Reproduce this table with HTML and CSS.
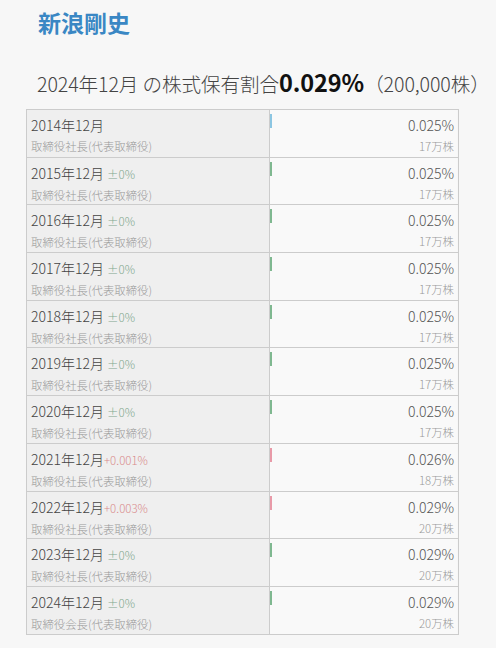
FILE: index.html
```html
<!DOCTYPE html>
<html lang="ja">
<head>
<meta charset="utf-8">
<link rel="stylesheet" href="styles.css">
</head>
<body>
<div class="page">
  <h1 class="name">新浪剛史</h1>
  <p class="summary">2024年12月 の株式保有割合<b class="pct">0.029%</b>（200,000株）</p>
  <div class="table">
    <div class="row">
      <div class="left"><div class="year">2014年12月</div><div class="role">取締役社長(代表取締役)</div></div>
      <div class="right"><span class="bar first"></span><div class="ratio">0.025%</div><div class="shares">17万株</div></div>
    </div>
    <div class="row">
      <div class="left"><div class="year">2015年12月 <span class="chg flat">±0%</span></div><div class="role">取締役社長(代表取締役)</div></div>
      <div class="right"><span class="bar flat"></span><div class="ratio">0.025%</div><div class="shares">17万株</div></div>
    </div>
    <div class="row">
      <div class="left"><div class="year">2016年12月 <span class="chg flat">±0%</span></div><div class="role">取締役社長(代表取締役)</div></div>
      <div class="right"><span class="bar flat"></span><div class="ratio">0.025%</div><div class="shares">17万株</div></div>
    </div>
    <div class="row">
      <div class="left"><div class="year">2017年12月 <span class="chg flat">±0%</span></div><div class="role">取締役社長(代表取締役)</div></div>
      <div class="right"><span class="bar flat"></span><div class="ratio">0.025%</div><div class="shares">17万株</div></div>
    </div>
    <div class="row">
      <div class="left"><div class="year">2018年12月 <span class="chg flat">±0%</span></div><div class="role">取締役社長(代表取締役)</div></div>
      <div class="right"><span class="bar flat"></span><div class="ratio">0.025%</div><div class="shares">17万株</div></div>
    </div>
    <div class="row">
      <div class="left"><div class="year">2019年12月 <span class="chg flat">±0%</span></div><div class="role">取締役社長(代表取締役)</div></div>
      <div class="right"><span class="bar flat"></span><div class="ratio">0.025%</div><div class="shares">17万株</div></div>
    </div>
    <div class="row">
      <div class="left"><div class="year">2020年12月 <span class="chg flat">±0%</span></div><div class="role">取締役社長(代表取締役)</div></div>
      <div class="right"><span class="bar flat"></span><div class="ratio">0.025%</div><div class="shares">17万株</div></div>
    </div>
    <div class="row">
      <div class="left"><div class="year">2021年12月<span class="chg up">+0.001%</span></div><div class="role">取締役社長(代表取締役)</div></div>
      <div class="right"><span class="bar up"></span><div class="ratio">0.026%</div><div class="shares">18万株</div></div>
    </div>
    <div class="row">
      <div class="left"><div class="year">2022年12月<span class="chg up">+0.003%</span></div><div class="role">取締役社長(代表取締役)</div></div>
      <div class="right"><span class="bar up"></span><div class="ratio">0.029%</div><div class="shares">20万株</div></div>
    </div>
    <div class="row">
      <div class="left"><div class="year">2023年12月 <span class="chg flat">±0%</span></div><div class="role">取締役社長(代表取締役)</div></div>
      <div class="right"><span class="bar flat"></span><div class="ratio">0.029%</div><div class="shares">20万株</div></div>
    </div>
    <div class="row">
      <div class="left"><div class="year">2024年12月 <span class="chg flat">±0%</span></div><div class="role">取締役会長(代表取締役)</div></div>
      <div class="right"><span class="bar flat"></span><div class="ratio">0.029%</div><div class="shares">20万株</div></div>
    </div>
  </div>
</div>
</body>
</html>
```
FILE: styles.css
```css
html, body {
  margin: 0;
  padding: 0;
  background: #f7f7f7;
}
body {
  font-family: "Noto Sans CJK JP", "Noto Sans", sans-serif;
  font-weight: 300;
  color: #444;
}
.page {
  padding: 7px 0 0 26px;
  width: 432px;
}
.name {
  margin: 0 0 0 12px;
  font-size: 23px;
  line-height: 30px;
  font-weight: bold;
  color: #3a87c4;
}
.summary {
  margin: 30px 0 0 11px;
  font-size: 19.6px;
  line-height: 30px;
  color: #444;
  white-space: nowrap;
  letter-spacing: -0.1px;
}
.pct {
  font-size: 23.5px;
  color: #111;
  font-weight: bold;
}
.table {
  margin-top: 10px;
  border: 1px solid #ccc;
  border-bottom: none;
  width: 431px;
}
.row {
  display: grid;
  grid-template-columns: 243px 187px;
  border-bottom: 1px solid #ccc;
  height: 46.7px;
  overflow: hidden;
}
.left {
  background: #efefef;
  border-right: 1px solid #ccc;
  padding: 3px 0 0 4px;
}
.right {
  position: relative;
  background: #f9f9f9;
  padding: 3px 3px 0 0;
  text-align: right;
}
.year {
  font-size: 14px;
  line-height: 25px;
  color: #444;
  white-space: nowrap;
}
.chg {
  font-size: 11.5px;
}
.chg.flat { color: #7fa88e; }
.chg.up { color: #d98a8a; }
.role {
  font-size: 11.4px;
  line-height: 17px;
  color: #999;
  white-space: nowrap;
}
.ratio {
  font-size: 14px;
  line-height: 25px;
  color: #555;
}
.shares {
  font-size: 11.4px;
  line-height: 17px;
  color: #999;
}
.bar {
  position: absolute;
  left: 0;
  top: 4px;
  width: 1.5px;
  height: 14px;
}
.bar.first { background: #8cc6e2; }
.bar.flat { background: #7fb890; }
.bar.up { background: #e89aa8; }
```
